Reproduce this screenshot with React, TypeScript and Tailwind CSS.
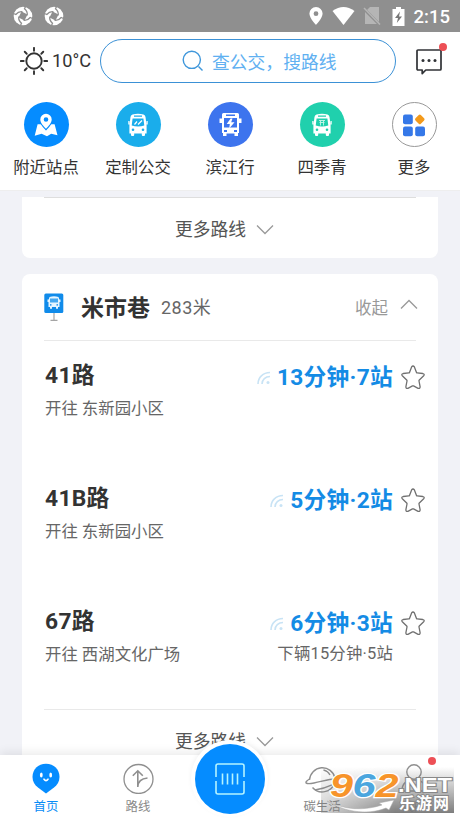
import React from 'react';

type IconProps = { className?: string };

const SwirlIcon: React.FC<IconProps> = ({ className }) => (
  <svg className={className} viewBox="0 0 20 20">
    <circle cx="10" cy="10" r="9.300" fill="white" />
    <path d="M8.500 5.500L14.500 8.500L11.500 14.500L5.500 11.500Z" fill="#8f8f8f" />
    {[0, 90, 180, 270].map((deg) => (
      <path key={deg} transform={`rotate(${deg} 10 10)`} d="M9.500 5.800Q5.500 5.200 2.800 8.500L.5 7.500" fill="none" stroke="#8f8f8f" strokeWidth="1.300" />
    ))}
  </svg>
);

const SunIcon: React.FC = () => (
  <svg className="w-[28px] h-[28px]" viewBox="0 0 28 28" fill="none" stroke="#333" strokeWidth="1.900" strokeLinecap="round">
    <circle cx="14" cy="14" r="7.700" />
    {[0, 45, 90, 135, 180, 225, 270, 315].map((deg) => (
      <path key={deg} transform={`rotate(${deg} 14 14)`} d="M14 .9V3.700" />
    ))}
  </svg>
);

const ChatIcon: React.FC = () => (
  <svg className="w-[26px] h-[26px]" viewBox="0 0 26 26" fill="none" stroke="#303236" strokeWidth="1.700">
    <path d="M2 1H24.200Q25 1 25 2V20Q25 21 24 21H9.800L6.200 24.700V21H2Q1 21 1 20V2Q1 1 2 1Z" strokeLinejoin="round" />
    <g fill="#303236" stroke="none">
      <circle cx="7" cy="11.500" r="1.500" />
      <circle cx="13" cy="11.500" r="1.500" />
      <circle cx="19" cy="11.500" r="1.500" />
    </g>
  </svg>
);

const MapPinIcon: React.FC = () => (
  <svg className="w-[24px] h-[24px]" viewBox="0 0 24 24" fill="white">
    <path d="M3.600 11.200H20.600L23.500 22.300L17.200 20.700L13 23.200L7.600 20.700L.7 22.800Z" />
    <path
      fillRule="evenodd"
      stroke="#058cff"
      strokeWidth="2.400"
      paintOrder="stroke"
      d="M12 .8a5.700 5.700 0 0 1 5.700 5.700c0 3.400-3.200 6.700-5.700 9.300-2.500-2.600-5.700-5.900-5.700-9.300A5.700 5.700 0 0 1 12 .8zm0 3.400a2.300 2.300 0 1 0 0 4.600 2.300 2.300 0 0 0 0-4.600z"
    />
  </svg>
);

const BusIcon: React.FC<{ hole: string; mark: React.ReactNode }> = ({ hole, mark }) => (
  <svg className="w-[22px] h-[24px]" viewBox="0 0 22 24">
    <path fill="white" d="M5.500 1.500Q11 .2 16.500 1.500Q18.300 2 18.500 4L19.600 12.500V20.500H18V22Q18 23 17 23H15.800Q14.800 23 14.800 22V20.500H7.200V22Q7.200 23 6.200 23H5Q4 23 4 22V20.500H2.400V12.500L3.500 4Q3.700 2 5.500 1.500ZM1.300 8H2.500V11.500H1.300ZM19.500 8H20.700V11.500H19.500Z" />
    <path fill={hole} d="M7 2.600H15V3.700H7ZM5.600 5.500H16.400L17.300 12.500Q11 14.500 4.700 12.500Z" />
    <circle cx="6" cy="16.800" r="1.300" fill={hole} />
    <circle cx="16" cy="16.800" r="1.300" fill={hole} />
    {mark}
  </svg>
);

const ElectricBusIcon: React.FC = () => (
  <svg className="w-[25px] h-[25px]" viewBox="0 0 25 25">
    <path fill="white" d="M4 2.500Q4 1 5.500 1H19.500Q21 1 21 2.500V21H20V24H16.500V21.500H8.500V24H5V21H4ZM1.500 6.500H4V11H1.500ZM21 6.500H23.500V11H21Z" />
    <path fill="#3d74ee" d="M8 2.600H17V4H8ZM6 6H19V15.500H6ZM6 18H9V20H6ZM16 18H19V20H16Z" />
    <path fill="white" d="M12.600 6.500L8.700 12H11.800L11.200 16.500L16.500 10.200H13.200L14.500 6.500Z" />
  </svg>
);

const GridIcon: React.FC = () => (
  <svg className="w-[24px] h-[24px]" viewBox="0 0 24 24" fill="#3578e8">
    <rect x="1" y="1.500" width="9.800" height="9.800" rx="2" />
    <rect x="1" y="13.500" width="9.800" height="9.800" rx="2" />
    <rect x="13.200" y="13.500" width="9.800" height="9.800" rx="2" />
    <rect x="14" y="2.600" width="7.600" height="7.600" rx="1.500" fill="#f39a1b" transform="rotate(45 17.800 6.400)" />
  </svg>
);

const StopIcon: React.FC = () => (
  <svg className="w-[20px] h-[29px]" viewBox="0 0 20 29">
    <path d="M10 19V27M6.500 27.300H13.500" stroke="#a5a5a5" strokeWidth="1.200" fill="none" />
    <rect x=".3" y=".5" width="19" height="19.500" rx="1.500" fill="#108bea" />
    <path d="M5.500 4Q10 2.600 14.500 4L15.300 6.500H16.500V9H15.500V14H14V15.800H12V14H8V15.800H6V14H4.500V9H3.500V6.500H4.700Z" fill="#e6f5ff" />
    <path d="M6 5.500H14V9.500H6Z" fill="#45a8f0" />
    <circle cx="6.800" cy="11.900" r=".8" fill="#108bea" />
    <circle cx="13.200" cy="11.900" r=".8" fill="#108bea" />
  </svg>
);

const Chevron: React.FC<{ up?: boolean }> = ({ up }) => (
  <svg className="w-[18px] h-[11px]" viewBox="0 0 18 11" fill="none" stroke="#999" strokeWidth="1.300">
    <path d={up ? 'M1 9.500L9 1.500L17 9.500' : 'M1 1.500L9 9.500L17 1.500'} />
  </svg>
);

const SignalIcon: React.FC = () => (
  <svg className="w-[14px] h-[14px]" viewBox="0 0 14 14" fill="none" stroke="#c8e3f5" strokeWidth="1.600">
    <path d="M1 13C1 6.500 6 1.500 13 1.500M5 13C5 8.500 8.500 5.500 13 5.500" />
    <circle cx="11" cy="11.500" r="1.500" fill="#c8e3f5" stroke="none" />
  </svg>
);

const StarIcon: React.FC = () => (
  <svg className="w-[24px] h-[25px]" viewBox="0 0 24 25" fill="none" stroke="#707070" strokeWidth="1.300" strokeLinejoin="round">
    <path d="M10.600 1.900Q12 .1 13.400 1.900L15.500 7.400Q15.700 7.900 16.200 7.900L21.800 8.500Q23.900 9.100 22.700 10.700L18.300 15Q17.900 15.400 18 16L19.100 21.700Q19.100 24 17.100 23.300L12.500 20.900Q12 20.700 11.500 20.900L6.900 23.300Q4.900 24 4.900 21.700L6 16Q6.100 15.400 5.700 15L1.300 10.700Q.1 9.100 2.200 8.500L7.800 7.900Q8.300 7.900 8.500 7.400Z" />
  </svg>
);

const SHORTCUTS = [
  { label: '附近站点', color: 'bg-[#058cff]', icon: <MapPinIcon /> },
  {
    label: '定制公交',
    color: 'bg-[#1aadeb]',
    icon: <BusIcon hole="#1aadeb" mark={<path d="M7.500 11.500L10 8.500M11 11.500L15 7.500" stroke="white" strokeWidth="1.200" />} />,
  },
  { label: '滨江行', color: 'bg-[#3d74ee]', icon: <ElectricBusIcon /> },
  {
    label: '四季青',
    color: 'bg-[#20d0ad]',
    icon: <BusIcon hole="#20d0ad" mark={<path d="M8 7.500H14M8.500 9.500H13.500M9.500 7.500V12.500M12.500 7.500V12.500" stroke="#c8f5e9" strokeWidth=".9" fill="none" />} />,
  },
  { label: '更多', color: 'bg-white border border-[#999]', icon: <GridIcon /> },
];

const ROUTES = [
  { name: '41路', to: '东新园小区', time: '13分钟·7站', next: '' },
  { name: '41B路', to: '东新园小区', time: '5分钟·2站', next: '' },
  { name: '67路', to: '西湖文化广场', time: '6分钟·3站', next: '下辆15分钟·5站' },
];

const StatusBar: React.FC = () => (
  <header className="flex h-8 items-center justify-between bg-[#8f8f8f] pl-[13px] pr-[10px] text-white">
    <div className="flex gap-[11px]">
      <SwirlIcon className="w-5 h-5" />
      <SwirlIcon className="w-5 h-5" />
    </div>
    <div className="flex items-center">
      <svg className="mr-[9px] h-[18px] w-[14px]" viewBox="0 0 14 18" fill="white">
        <path fillRule="evenodd" d="M7 0a6.600 6.600 0 0 1 6.600 6.600C13.600 11.200 7 18 7 18S.4 11.200.4 6.600A6.600 6.600 0 0 1 7 0zm0 4.300a2.400 2.400 0 1 0 0 4.800 2.400 2.400 0 0 0 0-4.800z" />
      </svg>
      <svg className="mr-[8px] h-[18px] w-[23px]" viewBox="0 0 23 18" fill="white">
        <path d="M.5 3.900Q11.500-3.700 22.500 3.900L11.500 18Z" />
      </svg>
      <svg className="mr-[11px] h-[18px] w-[18px]" viewBox="0 0 18 18">
        <path d="M7 0H16V17H2V5Z" fill="#b5b5b5" />
        <path d="M0 1L16.500 17.500" stroke="#8f8f8f" strokeWidth="3" />
        <path d="M1 1L17 17.500" stroke="#b5b5b5" strokeWidth="1.500" />
      </svg>
      <svg className="mr-[9px] h-[19px] w-[13px]" viewBox="0 0 13 19">
        <path fill="white" d="M4 0H9V2H12.500V19H.5V2H4Z" />
        <path fill="#777" d="M8 4.500L3 11H6L4.800 16L10 9.500H7Z" />
      </svg>
      <span className="pt-px text-[18.500px] font-medium leading-8">2:15</span>
    </div>
  </header>
);

const SearchRow: React.FC = () => (
  <div className="flex h-[58px] items-center pl-[20px]">
    <SunIcon />
    <span className="ml-[4px] w-[48px] text-[18.200px] leading-6 text-[#333]">10°C</span>
    <div className="flex h-[44px] w-[296px] items-center rounded-full border-[1.500px] border-[#3b91d6] pl-[81px]">
      <svg className="h-[22px] w-[22px]" viewBox="0 0 22 22" fill="none" stroke="#3f97db" strokeWidth="1.400">
        <circle cx="9.800" cy="9.800" r="8.600" />
        <path d="M16.500 16.500L20.500 20.500" />
      </svg>
      <span className="ml-[8px] mt-[3px] text-[17.800px] leading-6 text-[#60b0f1]">查公交，搜路线</span>
    </div>
    <div className="relative ml-[20px] mt-px">
      <ChatIcon />
      <i className="absolute -right-[5px] -top-[6px] h-2 w-2 rounded-full bg-[#ed4f55]" />
    </div>
  </div>
);

const MoreRoutes: React.FC = () => (
  <div className="flex items-center pl-[153px] text-[17.800px] leading-6 text-[#555]">
    <span className="pt-px">更多路线</span>
    <span className="ml-[10px]">
      <Chevron />
    </span>
  </div>
);

const RouteItem: React.FC<{ route: (typeof ROUTES)[number] }> = ({ route }) => (
  <li className="flex h-[123px] items-start justify-between">
    <div className="pt-px">
      <h3 className="text-[22.800px] font-bold leading-[30px] tracking-[0.3px] text-[#333]">{route.name}</h3>
      <p className="mt-[6px] text-[16.400px] leading-6 text-[#666]">开往 {route.to}</p>
    </div>
    <div className="flex items-start">
      <div className="pt-px text-right">
        <div className="flex items-center justify-end text-[22.700px] font-bold leading-[34px] text-[#148be5]">
          <SignalIcon />
          <span className="ml-[6px] tracking-[0.3px]">{route.time}</span>
        </div>
        {route.next && <p className="mt-px text-[16.400px] leading-6 tracking-[0.2px] text-[#666]">{route.next}</p>}
      </div>
      <span className="ml-[8px] mt-[5px]">
        <StarIcon />
      </span>
    </div>
  </li>
);

const StationCard: React.FC = () => (
  <section className="mt-4 h-[500px] rounded-lg bg-white">
    <div className="mx-[22px] flex h-[67px] items-center border-b border-[#e9e9e9]">
      <StopIcon />
      <h2 className="ml-[17px] pt-[3px] text-[23px] font-bold leading-8 text-[#333]">米市巷</h2>
      <span className="ml-[11px] pt-px text-[18px] leading-8 tracking-[0.500px] text-[#666]">283米</span>
      <span className="ml-auto mr-[12px] pt-[3px] text-[16.500px] leading-8 text-[#999]">收起</span>
      <span className="-mr-[2px] -mt-[5px]">
        <Chevron up />
      </span>
    </div>
    <ul className="pl-[23px] pr-[13px] pt-[19px]">
      {ROUTES.map((route) => (
        <RouteItem key={route.name} route={route} />
      ))}
    </ul>
    <div className="mx-[22px] -mt-[20px] mb-[19px] border-t border-[#e9e9e9]" />
    <MoreRoutes />
  </section>
);

const Watermark: React.FC = () => (
  <svg className="absolute left-[321px] top-[12px] h-[47px] w-[134px]" viewBox="0 0 134 47">
    <defs>
      <linearGradient id="shadeY" x1="0" y1="0" x2="0" y2="1">
        <stop offset="0" stopColor="#777" stopOpacity="0" />
        <stop offset="1" stopColor="#777" stopOpacity=".95" />
      </linearGradient>
      <linearGradient id="fadeX" x1="0" y1="0" x2="1" y2="0">
        <stop offset="0" stopColor="white" stopOpacity=".35" />
        <stop offset=".55" stopColor="white" />
      </linearGradient>
      <mask id="shadeMask">
        <rect width="134" height="47" fill="url(#fadeX)" />
      </mask>
    </defs>
    <rect width="133" height="46" fill="url(#shadeY)" mask="url(#shadeMask)" />
    <path d="M6 34C23 43 43 44 61 38L58 36L73 33L68 43L65 41C45 49 22 44 6 34Z" fill="white" stroke="#aaa" strokeWidth=".5" />
    <g fontFamily="Liberation Sans, sans-serif" fontWeight="bold" fontStyle="italic" fontSize="33" stroke="white" strokeWidth="2.500" paintOrder="stroke">
      <text x="9" y="29.500" textLength="23" lengthAdjust="spacingAndGlyphs" fill="#f7942a">9</text>
      <text x="31.500" y="29.500" textLength="23" lengthAdjust="spacingAndGlyphs" fill="#4ba6de">6</text>
      <text x="54.500" y="29.500" textLength="23" lengthAdjust="spacingAndGlyphs" fill="#f7942a">2</text>
    </g>
    <g fontWeight="bold" fill="white" stroke="#888" strokeWidth="2" paintOrder="stroke">
      <text x="77" y="24.500" fontFamily="Liberation Sans, sans-serif" fontSize="20" textLength="54" lengthAdjust="spacingAndGlyphs">.NET</text>
      <text x="78" y="42" fontFamily="Noto Sans CJK SC, sans-serif" fontSize="16" textLength="50">乐游网</text>
    </g>
  </svg>
);

const TabBar: React.FC = () => (
  <nav className="relative grid h-16 grid-cols-5 bg-white text-center text-[12.400px] leading-4 text-[#888] shadow-[0_-3px_9px_rgba(0,0,0,0.08)]">
    <div className="flex flex-col items-center pt-[8px] text-[#078cf5]">
      <svg className="mb-[5px] h-[31px] w-[28px]" viewBox="0 0 28 31">
        <path d="M14 .7C22 .7 27.500 6.500 27.500 14C27.500 18.500 25.300 22 22 24.600L14 30.500L6 24.600C2.700 22 .5 18.500 .5 14C.5 6.500 6 .7 14 .7Z" fill="#058cff" />
        <ellipse cx="9.300" cy="12" rx="1.400" ry="2.500" fill="white" />
        <ellipse cx="18.700" cy="12" rx="1.400" ry="2.500" fill="white" />
        <path d="M12 16.200Q14 19 16 16.200" stroke="white" strokeWidth="1.600" fill="none" strokeLinecap="round" />
      </svg>
      首页
    </div>
    <div className="flex flex-col items-center pt-[8px]">
      <svg className="mb-[5px] h-[31px] w-[31px]" viewBox="0 0 31 31" fill="none" stroke="#8f8f8f" strokeWidth="1.300">
        <circle cx="15.500" cy="16" r="14.500" />
        <path d="M14.800 24V8M9.800 12.800L14.800 7.800L19.800 12.800M14.800 24C15 18.500 18.500 15.500 24.500 15" strokeWidth="1.600" />
      </svg>
      路线
    </div>
    <div />
    <div className="flex flex-col items-center pt-[8px]">
      <svg className="mb-[5px] h-[31px] w-[36px]" viewBox="0 0 36 31" fill="none" stroke="#8f8f8f" strokeWidth="1.400">
        <path d="M5.500 17A12.900 12.900 0 0 1 31 15M8.500 24.500A12.900 12.900 0 0 0 30.500 20" />
        <path d="M5.500 16C-1 20 2 21.500 10 20C20 18 30 14.500 33.500 16.500C36 19 24 25 11 27M19.500 7Q24 8 26 12" />
      </svg>
      碳生活
    </div>
    <div className="relative flex flex-col items-center pt-[8px]">
      <svg className="mb-[5px] h-[31px] w-[30px]" viewBox="0 0 30 31" fill="none" stroke="#8f8f8f" strokeWidth="1.400">
        <circle cx="15" cy="9" r="7.200" />
        <path d="M3 28C3 20 8 17 15 17S27 20 27 28Z" />
      </svg>
      我的
      <i className="absolute right-[24px] top-[2px] h-2 w-2 rounded-full bg-[#ed4f55]" />
    </div>
    <div className="absolute left-[191px] -top-[15px] flex h-[77px] w-[77px] items-center justify-center rounded-full bg-white shadow-[0_-2px_5px_rgba(0,0,0,0.05)]">
      <div className="flex h-[70px] w-[70px] items-center justify-center rounded-full bg-[#058cff]">
        <svg className="h-[32px] w-[30px]" viewBox="0 0 30 32" fill="none" stroke="#b4f3ff" strokeWidth="1.600">
          <path d="M1 14V3Q1 1 3 1H27Q29 1 29 3V14M1 18V29Q1 31 3 31H27Q29 31 29 29V18M7.500 10.500V21.500M12.500 10.500V21.500M17.500 10.500V21.500M22.500 10.500V21.500" />
        </svg>
      </div>
    </div>
    <Watermark />
  </nav>
);

export default function App() {
  return (
    <div className="flex h-[819px] w-[460px] flex-col overflow-hidden bg-white font-[Roboto,'Noto_Sans_CJK_SC',sans-serif]">
      <StatusBar />
      <SearchRow />
      <div className="grid h-[101px] grid-cols-5 border-b border-[#eee] pt-[12px]">
        {SHORTCUTS.map((item) => (
          <div key={item.label} className="flex flex-col items-center">
            <span className={`flex h-[45px] w-[45px] items-center justify-center rounded-full ${item.color}`}>{item.icon}</span>
            <span className="mt-[9px] text-[16.400px] leading-6 text-[#333]">{item.label}</span>
          </div>
        ))}
      </div>
      <main className="h-[564px] overflow-hidden bg-[#f1f2f7] px-[22px] pt-[6px]">
        <section className="h-[61px] rounded-b-lg bg-white">
          <div className="mx-[22px] mb-[19px] border-t border-[#dedede]" />
          <MoreRoutes />
        </section>
        <StationCard />
      </main>
      <TabBar />
    </div>
  );
}
